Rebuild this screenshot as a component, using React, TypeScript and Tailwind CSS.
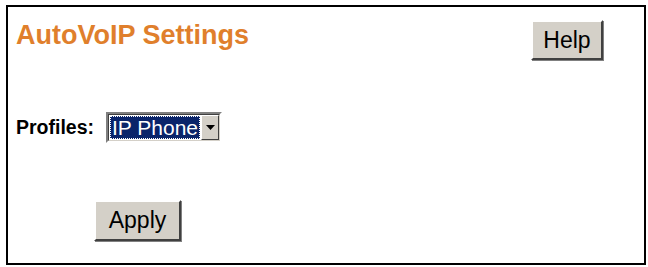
import React from "react";

const btn =
  "bg-[#d4d0c8] text-black font-['Liberation_Sans',Arial,sans-serif] border-t-2 border-l-2 border-t-white border-l-white border-b-2 border-r-2 border-b-[#404040] border-r-[#404040] shadow-[1px_1px_0_#808080] leading-none flex items-center justify-center";

export default function App() {
  return (
    <div className="w-[648px] h-[267px] bg-white overflow-hidden font-['Liberation_Sans',Arial,sans-serif]">
      {/* caption cut off by the crop: only descenders show */}
      <div className="h-[5px] overflow-hidden">
        <div className="flex -mt-[17px] text-[17px] font-bold leading-[17px] text-black">
          <span className="ml-[12px]">Figure 98</span>
          <span className="ml-[71px]">AutoVoIP Settings</span>
        </div>
      </div>

      <div className="ml-[6px] mr-[2px] h-[260px] border-2 border-black flex flex-col">
        <div className="flex items-start justify-between">
          <h1 className="ml-[8px] mt-[15px] text-[27px] leading-none font-bold text-[#e07f2c]">
            AutoVoIP Settings
          </h1>
          <button className={`${btn} mr-[41px] mt-[13px] w-[72px] h-[40px] text-[23px]`}>
            Help
          </button>
        </div>

        <div className="flex items-center mt-[52px] ml-[8px]">
          <span className="text-[19.5px] font-bold leading-none w-[90px]">Profiles:</span>
          <div className="flex items-stretch h-[31px] border-2 border-t-[#808080] border-l-[#808080] border-b-white border-r-white bg-white">
            <div className="border border-t-[#404040] border-l-[#404040] border-b-[#d4d0c8] border-r-[#d4d0c8] flex items-stretch">
              <div className="m-[1px] flex items-center bg-[#0a246a] outline-1 outline-dotted outline-white -outline-offset-1 px-[2px]">
                <span className="text-white text-[21px] leading-none">IP Phone</span>
              </div>
              <div className="w-[18px] bg-[#d4d0c8] border-t border-l border-t-white border-l-white border-b border-r border-b-[#404040] border-r-[#404040] flex items-center justify-center">
                <svg width="9" height="5" viewBox="0 0 9 5">
                  <path d="M0 0h9L4.5 5z" fill="#000" />
                </svg>
              </div>
            </div>
          </div>
        </div>

        <div className="mt-[57px] ml-[86px]">
          <button className={`${btn} w-[87px] h-[41px] text-[23px]`}>Apply</button>
        </div>
      </div>
    </div>
  );
}
